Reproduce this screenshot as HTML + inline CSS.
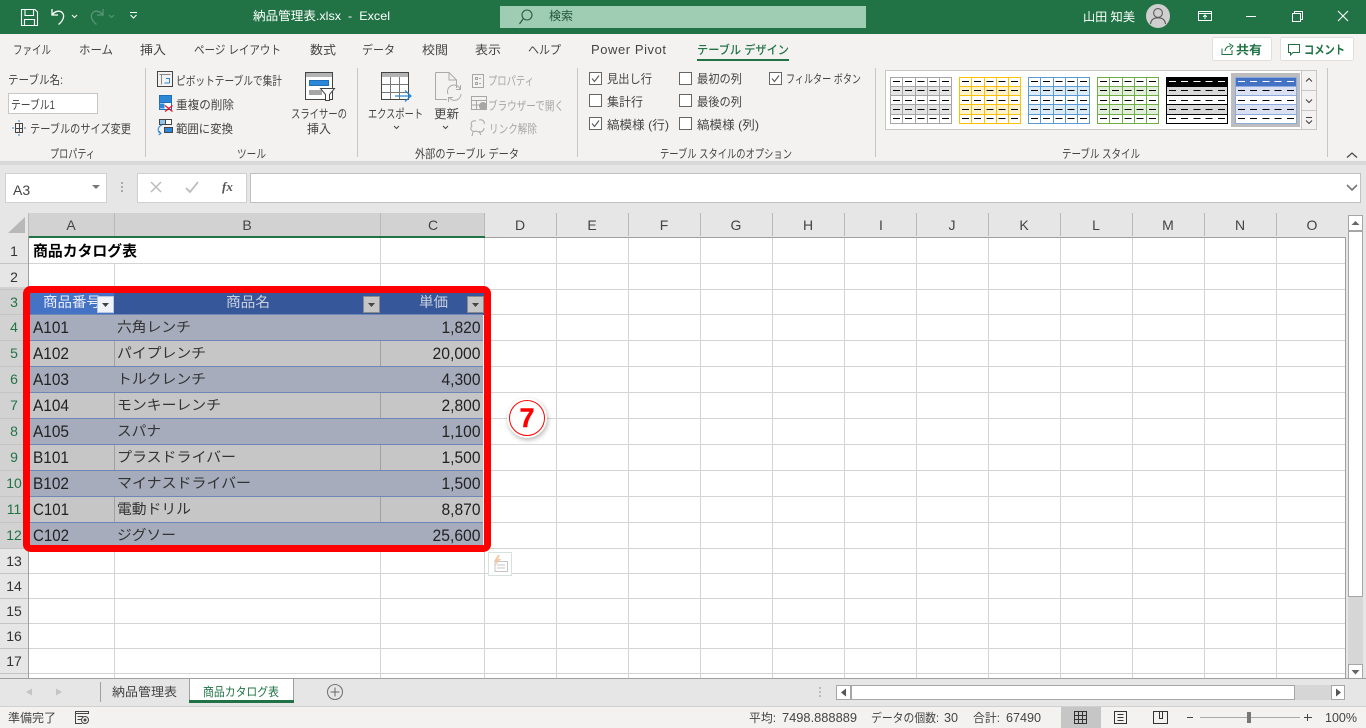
<!DOCTYPE html>
<html lang="ja"><head><meta charset="utf-8"><title>納品管理表.xlsx - Excel</title>
<style>
html,body{margin:0;padding:0;width:1366px;height:728px;overflow:hidden;background:#e6e6e6}
svg{display:block;position:absolute;left:0;top:0}
text{font-family:"Liberation Sans","Noto Sans CJK JP",sans-serif;font-size:12px;fill:#444;white-space:pre}
.w{fill:#fff}.g{fill:#a6a6a6}.c{font-size:14.2px;fill:#333}.d{font-size:16.5px;fill:#222}.h{font-size:14px;fill:#c9d0dc}
.n{font-size:14px;fill:#333;text-anchor:middle}.s{fill:#217346}.l{font-size:14px;fill:#444;text-anchor:middle}
.cr{shape-rendering:crispEdges}
</style></head><body>
<svg width="1366" height="728" viewBox="0 0 1366 728" xmlns="http://www.w3.org/2000/svg">
<defs>
<path id="grid" fill="none" stroke-width="1" d="M.5.5H61.5V46.5H.5ZM.5 9.5H61.5M.5 18.5H61.5M.5 27.5H61.5M.5 37.5H61.5M12.5.5V46.5M25.5.5V46.5M37.5.5V46.5M49.5.5V46.5"/>
<path id="rows" fill="none" stroke-width="1" d="M.5.5H61.5V46.5H.5ZM.5 9.5H61.5M.5 18.5H61.5M.5 27.5H61.5M.5 37.5H61.5"/>
<path id="dash" fill="none" stroke-width="1" stroke-dasharray="7 5.2" d="M3 4.5H61M3 13.5H61M3 23.5H61M3 32.5H61M3 41.5H61"/>
<filter id="soft" x="-40%" y="-40%" width="180%" height="180%"><feGaussianBlur stdDeviation="2.5"/></filter>
</defs>

<!-- backgrounds -->
<g class="cr">
<rect width="1366" height="728" fill="#e6e6e6"/>
<rect width="1366" height="34" fill="#217346"/>
<rect y="34" width="1366" height="127" fill="#f3f2f1"/>
<rect y="161" width="1366" height="4" fill="#d8d8d8"/>
<rect x="500" y="6" width="366" height="22" fill="#9fcdb3"/>
</g>

<!-- title bar -->
<g fill="none" stroke="#fff" stroke-width="1.1">
<path d="M21.5 9.5H35L37.5 12V25.5H21.5ZM25 9.5V15.5H33.5V9.5M24.5 25.5V19.5H34.5V25.5"/>
<path d="M52 9V15H58M52.5 14.5C55 11 60 10 62.5 13C65 16 63 21 58.5 24.5" stroke-width="1.3"/>
<path d="M72 15L74.5 17.5L77 15" stroke-width="1"/>
<g stroke="#5b9476" stroke-width="1.3"><path d="M103 9V15H97M102.5 14.5C100 11 95 10 92.5 13C90 16 92 21 96.5 24.5"/><path d="M109 15L111.5 17.5L114 15" stroke-width="1"/></g>
<path d="M130 12.5H137M130.5 15L133.5 18L136.5 15" stroke-width="1"/>
</g>
<text class="w" x="253" y="20" textLength="137" lengthAdjust="spacingAndGlyphs">納品管理表.xlsx  -  Excel</text>
<circle cx="527" cy="15" r="5" fill="none" stroke="#2b5a41" stroke-width="1.1"/>
<path d="M523 19L519.5 24" stroke="#2b5a41" stroke-width="1.2"/>
<text x="549" y="20" textLength="24" lengthAdjust="spacingAndGlyphs" style="fill:#22553a">検索</text>
<text class="w" x="1083" y="21" textLength="52" lengthAdjust="spacingAndGlyphs">山田 知美</text>
<circle cx="1158" cy="16" r="12" fill="#cfcfcf"/>
<circle cx="1158" cy="13" r="4.4" fill="none" stroke="#5a5a5a" stroke-width="1.1"/>
<path d="M1150.5 24C1151 19.5 1154 17.8 1158 17.8C1162 17.8 1165 19.5 1165.5 24" fill="none" stroke="#5a5a5a" stroke-width="1.1"/>
<g fill="none" stroke="#fff" stroke-width="1" class="cr">
<path d="M1198.5 11.5H1211.5V20.5H1198.5ZM1198.5 13.5H1211.5"/>
<path d="M1205 19V15.5M1203 17L1205 15L1207 17"/>
<path d="M1246 16.5H1256"/>
<path d="M1292.5 13.5H1300.5V21.5H1292.5ZM1294.5 13V11.5H1302.5V19.5H1301"/>
</g>
<path d="M1338 11L1348 21M1348 11L1338 21" stroke="#fff" stroke-width="1.1" fill="none"/>

<!-- ribbon tabs -->
<text x="13" y="54" textLength="38" lengthAdjust="spacingAndGlyphs">ファイル</text>
<text x="79" y="54" textLength="34" lengthAdjust="spacingAndGlyphs">ホーム</text>
<text x="140" y="54" textLength="26" lengthAdjust="spacingAndGlyphs">挿入</text>
<text x="194" y="54" textLength="87" lengthAdjust="spacingAndGlyphs">ページ レイアウト</text>
<text x="310" y="54" textLength="26" lengthAdjust="spacingAndGlyphs">数式</text>
<text x="362" y="54" textLength="33" lengthAdjust="spacingAndGlyphs">データ</text>
<text x="422" y="54" textLength="26" lengthAdjust="spacingAndGlyphs">校閲</text>
<text x="475" y="54" textLength="26" lengthAdjust="spacingAndGlyphs">表示</text>
<text x="528" y="54" textLength="33" lengthAdjust="spacingAndGlyphs">ヘルプ</text>
<text x="591" y="54" textLength="75" lengthAdjust="spacing" style="font-size:13px">Power Pivot</text>
<text x="697" y="54" textLength="92" lengthAdjust="spacingAndGlyphs" style="fill:#217346;font-weight:500">テーブル デザイン</text>
<rect x="697" y="59" width="92" height="2" fill="#217346" class="cr"/>
<g class="cr">
<rect x="1212.5" y="37.5" width="59" height="23" rx="2" fill="#fff" stroke="#e1dfdd"/>
<rect x="1280.5" y="37.5" width="73" height="23" rx="2" fill="#fff" stroke="#e1dfdd"/>
</g>
<path d="M1222 48.5V54.5H1232V50M1225 51C1225.5 47.5 1228 46 1231 46M1229 43.5L1233 46L1230 49.5" fill="none" stroke="#217346"/>
<text x="1236" y="54" textLength="26" lengthAdjust="spacingAndGlyphs" style="fill:#217346;font-weight:700">共有</text>
<path d="M1288.5 44.5H1299.5V52.5H1293L1290.5 55V52.5H1288.5Z" fill="none" stroke="#217346"/>
<text x="1304" y="54" textLength="41" lengthAdjust="spacingAndGlyphs" style="fill:#217346;font-weight:700">コメント</text>

<!-- ribbon separators -->
<path class="cr" d="M145.5 68V157M357.5 68V157M577.5 68V157M875.5 68V157M1327.5 68V157" stroke="#c8c6c4" fill="none"/>

<!-- properties group -->
<text x="8" y="84" textLength="55" lengthAdjust="spacingAndGlyphs">テーブル名:</text>
<rect class="cr" x="8.5" y="93.5" width="89" height="20" fill="#fff" stroke="#c6c6c6"/>
<text x="11" y="109" textLength="44" lengthAdjust="spacingAndGlyphs">テーブル1</text>
<path class="cr" d="M15.5 123.5H22.5V132.5H15.5ZM15.5 128.5H22.5M19.5 123.5V132.5" fill="none" stroke="#444"/>
<path d="M12 128H14M24 128H26M19 120V122M19 134V136" stroke="#2b88d8" fill="none"/>
<text x="30" y="133" textLength="101" lengthAdjust="spacingAndGlyphs">テーブルのサイズ変更</text>
<text x="50" y="158" textLength="45" lengthAdjust="spacingAndGlyphs">プロパティ</text>

<!-- tools group -->
<g class="cr" fill="none">
<rect x="157.5" y="71.5" width="15" height="15" stroke="#444"/>
<path d="M159.5 74.5H170.5M161.5 74.5V84.5" stroke="#888"/>
<path d="M166 78.5H169.5V83M164.5 83H169.5" stroke="#2b88d8"/>
<rect x="159.5" y="95.5" width="12" height="7" fill="#2b88d8" stroke="#1e6fb5"/>
<rect x="159.5" y="102.5" width="12" height="7" fill="#fff" stroke="#1e6fb5"/>
<rect x="159.5" y="103.5" width="5" height="5" fill="#2b88d8"/>
<rect x="159.5" y="119.5" width="6" height="5" fill="#8fc3ea" stroke="#444"/>
<rect x="165.5" y="119.5" width="6" height="5" stroke="#444" fill="#fff"/>
<rect x="164.5" y="127.5" width="8" height="5" fill="#2b88d8" stroke="#444"/>
</g>
<path d="M165 105.5L172.5 111.5M172.5 105.5L165 111.5" stroke="#e81123" stroke-width="1.2" fill="none"/>
<path d="M162 125C157 127 157 132 161 133.5M159 131L161 133.5L158.5 135" stroke="#2b88d8" fill="none"/>
<text x="176" y="85" textLength="106" lengthAdjust="spacingAndGlyphs">ピボットテーブルで集計</text>
<text x="176" y="109" textLength="58" lengthAdjust="spacingAndGlyphs">重複の削除</text>
<text x="176" y="133" textLength="57" lengthAdjust="spacingAndGlyphs">範囲に変換</text>
<text x="237" y="158" textLength="29" lengthAdjust="spacingAndGlyphs">ツール</text>
<g class="cr">
<rect x="305.5" y="72.5" width="27" height="27" fill="#fff" stroke="#444"/>
<rect x="306" y="73" width="26" height="4" fill="#b3b3b3"/>
<rect x="309.5" y="80.5" width="19" height="5" fill="#2b88d8" stroke="#1e6fb5"/>
<rect x="309" y="90" width="13" height="5" fill="#a6a6a6"/>
</g>
<path d="M320.5 88.5H334.5L329.5 94.5V100.5H325.5V94.5Z" fill="#fff" stroke="#444"/>
<text x="291" y="118" textLength="56" lengthAdjust="spacingAndGlyphs">スライサーの</text>
<text x="307" y="133" textLength="24" lengthAdjust="spacingAndGlyphs">挿入</text>

<!-- external data -->
<g class="cr" fill="none">
<rect x="381.5" y="72.5" width="27" height="27" fill="#fff" stroke="#444"/>
<rect x="382" y="73" width="26" height="4" fill="#b3b3b3"/>
<path d="M382 84.5H408M382 92.5H408M390.5 77V99M399.5 77V99" stroke="#777"/>
</g>
<path d="M395 96H410M405 90.5L411 96L405 101.5" fill="none" stroke="#2b88d8" stroke-width="1.2"/>
<text x="368" y="118" textLength="55" lengthAdjust="spacingAndGlyphs">エクスポート</text>
<path d="M394 126L396.5 128.5L399 126" fill="none" stroke="#444"/>
<path d="M435.5 72.5H449L456.5 80V88M449 72.5V80H456.5M435.5 72.5V99.5H447" fill="none" stroke="#aaa"/>
<path d="M448 94A6.5 6.5 0 0 1 460 89M461 94A6.5 6.5 0 0 1 449.5 98M460.5 85V89.5H456M448.5 102V97.5H453" fill="none" stroke="#aaa"/>
<text x="434" y="118" textLength="25" lengthAdjust="spacingAndGlyphs">更新</text>
<path d="M443 126L445.5 128.5L448 126" fill="none" stroke="#444"/>
<g fill="none" stroke="#a6a6a6" class="cr">
<path d="M472.5 74.5H483.5V87.5H472.5ZM475.5 77.5H477.5V79.5H475.5ZM475.5 82.5H477.5V84.5H475.5ZM479 78.5H481M479 83.5H481"/>
<path d="M471.5 96.5H486.5V109.5H471.5ZM471.5 100.5H486.5M476.5 100.5V109.5M471.5 105H480"/>
</g>
<circle cx="483" cy="106" r="4" fill="#a6a6a6"/>
<path d="M476 121C472 120 470 123 472 126C469 128 472 133 476 131C479 133 484 132 484 128M479 120C483 119 485 122 484 124M473 132L472 136M479 131L481 135" fill="none" stroke="#a6a6a6"/>
<text class="g" x="488" y="85" textLength="46" lengthAdjust="spacingAndGlyphs">プロパティ</text>
<text class="g" x="488" y="110" textLength="76" lengthAdjust="spacingAndGlyphs">ブラウザーで開く</text>
<text class="g" x="489" y="133" textLength="48" lengthAdjust="spacingAndGlyphs">リンク解除</text>
<text x="415" y="158" textLength="104" lengthAdjust="spacingAndGlyphs">外部のテーブル データ</text>

<!-- style options -->
<g class="cr" fill="#fff" stroke="#666">
<rect x="589.5" y="72.5" width="12" height="12"/>
<rect x="589.5" y="94.5" width="12" height="12"/>
<rect x="589.5" y="117.5" width="12" height="12"/>
<rect x="679.5" y="72.5" width="12" height="12"/>
<rect x="679.5" y="94.5" width="12" height="12"/>
<rect x="679.5" y="117.5" width="12" height="12"/>
<rect x="769.5" y="72.5" width="12" height="12"/>
</g>
<path d="M592 78.5L594.5 81.5L599 75.5M592 123.5L594.5 126.5L599 120.5M772 78.5L774.5 81.5L779 75.5" fill="none" stroke="#555" stroke-width="1.1"/>
<text x="607" y="83" textLength="45" lengthAdjust="spacingAndGlyphs">見出し行</text>
<text x="607" y="106" textLength="36" lengthAdjust="spacingAndGlyphs">集計行</text>
<text x="607" y="129" textLength="62" lengthAdjust="spacingAndGlyphs">縞模様 (行)</text>
<text x="697" y="83" textLength="45" lengthAdjust="spacingAndGlyphs">最初の列</text>
<text x="697" y="106" textLength="45" lengthAdjust="spacingAndGlyphs">最後の列</text>
<text x="697" y="129" textLength="62" lengthAdjust="spacingAndGlyphs">縞模様 (列)</text>
<text x="786" y="83" textLength="75" lengthAdjust="spacingAndGlyphs">フィルター ボタン</text>
<text x="660" y="158" textLength="132" lengthAdjust="spacingAndGlyphs">テーブル スタイルのオプション</text>

<!-- gallery -->
<g class="cr">
<rect x="885.5" y="70.5" width="431" height="59" fill="#fff" stroke="#c6c6c6"/>
<rect x="1231" y="73" width="69" height="54" fill="#bdbdbd"/>
<g transform="translate(890,77)"><rect y="9" width="61" height="9" fill="#e4e4e4"/><rect y="27" width="61" height="10" fill="#e4e4e4"/><use href="#grid" stroke="#a5a5a5"/><use href="#dash" stroke="#000"/></g>
<g transform="translate(959,77)"><rect y="9" width="61" height="9" fill="#fff2cc"/><rect y="27" width="61" height="10" fill="#fff2cc"/><use href="#grid" stroke="#ffc000"/><use href="#dash" stroke="#000"/></g>
<g transform="translate(1028,77)"><rect y="9" width="61" height="9" fill="#ddebf7"/><rect y="27" width="61" height="10" fill="#ddebf7"/><use href="#grid" stroke="#5b9bd5"/><use href="#dash" stroke="#000"/></g>
<g transform="translate(1097,77)"><rect y="9" width="61" height="9" fill="#e2efda"/><rect y="27" width="61" height="10" fill="#e2efda"/><use href="#grid" stroke="#70ad47"/><use href="#dash" stroke="#000"/></g>
<g transform="translate(1166,77)"><rect width="61" height="47" fill="#fff"/><rect width="61" height="9" fill="#000"/><rect y="9" width="61" height="9" fill="#d9d9d9"/><rect y="27" width="61" height="10" fill="#d9d9d9"/><use href="#rows" stroke="#000"/><path d="M3 4.5H61" stroke="#fff" stroke-dasharray="7 5.2" fill="none"/><path d="M3 13.5H61M3 23.5H61M3 32.5H61M3 41.5H61" stroke="#000" stroke-dasharray="7 5.2" fill="none"/></g>
<g transform="translate(1235,77)"><rect width="61" height="47" fill="#fff"/><rect width="61" height="9" fill="#4472c4"/><rect y="9" width="61" height="9" fill="#d9e1f2"/><rect y="27" width="61" height="10" fill="#d9e1f2"/><use href="#rows" stroke="#8ea9db"/><path d="M3 4.5H61" stroke="#fff" stroke-dasharray="7 5.2" fill="none"/><path d="M3 13.5H61M3 23.5H61M3 32.5H61M3 41.5H61" stroke="#000" stroke-dasharray="7 5.2" fill="none"/></g>
<rect x="1301.5" y="70.5" width="15" height="20" fill="#f3f2f1" stroke="#c6c6c6"/>
<rect x="1301.5" y="90.5" width="15" height="20" fill="#f3f2f1" stroke="#c6c6c6"/>
<rect x="1301.5" y="110.5" width="15" height="19" fill="#f3f2f1" stroke="#c6c6c6"/>
</g>
<path d="M1306 81.5L1309 78.5L1312 81.5M1306 99.5L1309 102.5L1312 99.5M1306 117.5H1312M1306 120.5L1309 123.5L1312 120.5" fill="none" stroke="#444" stroke-width="1.1"/>
<text x="1062" y="158" textLength="78" lengthAdjust="spacingAndGlyphs">テーブル スタイル</text>
<path d="M1347 157.5L1352 153L1357 157.5" fill="none" stroke="#444" stroke-width="1.2"/>

<!-- formula bar -->
<g class="cr">
<rect x="5.5" y="173.5" width="101" height="29" fill="#fff" stroke="#d0d0d0"/>
<rect x="137.5" y="173.5" width="109" height="29" fill="#fff" stroke="#d0d0d0"/>
<rect x="250.5" y="173.5" width="1110" height="29" fill="#fff" stroke="#c0c0c0"/>
</g>
<text x="13" y="195" style="font-size:14px">A3</text>
<path d="M92 185H100L96 189Z" fill="#777"/>
<path class="cr" d="M121 182h2v2h-2zM121 186h2v2h-2zM121 190h2v2h-2z" fill="#aaa"/>
<path d="M151 182L161 192M161 182L151 192" stroke="#bbb" stroke-width="1.5" fill="none"/>
<path d="M186 188L190 192L198 182" stroke="#bbb" stroke-width="1.8" fill="none"/>
<text x="222" y="191" style="font-family:'Liberation Serif',serif;font-style:italic;font-weight:700;font-size:13px;fill:#555">fx</text>
<path d="M1347 185L1352 190L1357 185" fill="none" stroke="#777" stroke-width="1.6"/>

<!-- sheet -->
<g class="cr">
<rect x="29" y="238" width="1316" height="440" fill="#fff"/>
<rect x="29" y="213" width="456" height="23" fill="#d2d2d2"/>
<rect x="0" y="287" width="28" height="261" fill="#d2d2d2"/>
<path d="M8 233H25V217Z" fill="#b8b8b8" shape-rendering="auto"/>
<path fill="none" stroke="#d4d4d4" d="M29 263.5H1345M29 289.5H1345M29 314.5H1345M29 340.5H1345M29 366.5H1345M29 392.5H1345M29 418.5H1345M29 444.5H1345M29 470.5H1345M29 496.5H1345M29 522.5H1345M29 548.5H1345M29 573.5H1345M29 598.5H1345M29 623.5H1345M29 648.5H1345M29 673.5H1345"/>
<path fill="none" stroke="#d4d4d4" d="M114.5 263V678M380.5 238V678M484.5 238V678M556.5 238V678M628.5 238V678M700.5 238V678M772.5 238V678M844.5 238V678M916.5 238V678M988.5 238V678M1060.5 238V678M1132.5 238V678M1204.5 238V678M1276.5 238V678"/>
<path fill="none" stroke="#b9b9b9" d="M28.5 213V236M114.5 213V236M380.5 213V236M484.5 213V236M556.5 213V236M628.5 213V236M700.5 213V236M772.5 213V236M844.5 213V236M916.5 213V236M988.5 213V236M1060.5 213V236M1132.5 213V236M1204.5 213V236M1276.5 213V236"/>
<path fill="none" stroke="#c4c4c4" d="M0 263.5H28M0 289.5H28M0 314.5H28M0 340.5H28M0 366.5H28M0 392.5H28M0 418.5H28M0 444.5H28M0 470.5H28M0 496.5H28M0 522.5H28M0 548.5H28M0 573.5H28M0 598.5H28M0 623.5H28M0 648.5H28M0 673.5H28"/>
<path fill="none" stroke="#9f9f9f" d="M28.5 236V678M485 237.5H1345.5V678M29 678.5H1345.5"/>
<rect x="29" y="236" width="456" height="2" fill="#217346"/>

<!-- table -->
<rect x="30" y="293" width="454" height="22" fill="#36589a"/>
<rect x="30" y="293" width="84" height="22" fill="#4472c4"/>
<rect x="30" y="315" width="453" height="26" fill="#a6acbb"/>
<rect x="30" y="341" width="453" height="26" fill="#c6c6c6"/>
<rect x="30" y="367" width="453" height="26" fill="#a6acbb"/>
<rect x="30" y="393" width="453" height="26" fill="#c6c6c6"/>
<rect x="30" y="419" width="453" height="26" fill="#a6acbb"/>
<rect x="30" y="445" width="453" height="26" fill="#c6c6c6"/>
<rect x="30" y="471" width="453" height="26" fill="#a6acbb"/>
<rect x="30" y="497" width="453" height="26" fill="#c6c6c6"/>
<rect x="30" y="523" width="453" height="23" fill="#a6acbb"/>
<rect x="483" y="315" width="1" height="231" fill="#fff"/>
<path fill="none" stroke="#a0a0a0" d="M114.5 341V366M380.5 341V366M114.5 393V418M380.5 393V418M114.5 445V470M380.5 445V470M114.5 497V522M380.5 497V522"/>
<path fill="none" stroke="#6f87b5" d="M30 314.5H483M30 340.5H483M30 366.5H483M30 392.5H483M30 418.5H483M30 444.5H483M30 470.5H483M30 496.5H483M30 522.5H483"/>
</g>

<!-- column letters -->
<text class="l s" x="71" y="230">A</text>
<text class="l s" x="247" y="230">B</text>
<text class="l s" x="433" y="230">C</text>
<text class="l" x="520" y="230">D</text>
<text class="l" x="592" y="230">E</text>
<text class="l" x="664" y="230">F</text>
<text class="l" x="736" y="230">G</text>
<text class="l" x="808" y="230">H</text>
<text class="l" x="881" y="230">I</text>
<text class="l" x="952" y="230">J</text>
<text class="l" x="1024" y="230">K</text>
<text class="l" x="1096" y="230">L</text>
<text class="l" x="1168" y="230">M</text>
<text class="l" x="1240" y="230">N</text>
<text class="l" x="1312" y="230">O</text>

<!-- row numbers -->
<text class="n" x="14" y="256">1</text>
<text class="n" x="14" y="282">2</text>
<text class="n s" x="14" y="307">3</text>
<text class="n s" x="14" y="332">4</text>
<text class="n s" x="14" y="358">5</text>
<text class="n s" x="14" y="384">6</text>
<text class="n s" x="14" y="410">7</text>
<text class="n s" x="14" y="436">8</text>
<text class="n s" x="14" y="462">9</text>
<text class="n s" x="14" y="488">10</text>
<text class="n s" x="14" y="514">11</text>
<text class="n s" x="14" y="540">12</text>
<text class="n" x="14" y="566">13</text>
<text class="n" x="14" y="591">14</text>
<text class="n" x="14" y="616">15</text>
<text class="n" x="14" y="641">16</text>
<text class="n" x="14" y="666">17</text>

<!-- cell text -->
<text x="33" y="256" textLength="104" lengthAdjust="spacingAndGlyphs" style="font-size:14.67px;font-weight:700;fill:#000">商品カタログ表</text>
<text class="h" x="43" y="307" textLength="58" lengthAdjust="spacingAndGlyphs" style="fill:#e8ecf5">商品番号</text>
<text class="h" x="226" y="307" textLength="44" lengthAdjust="spacingAndGlyphs">商品名</text>
<text class="h" x="419" y="307" textLength="29" lengthAdjust="spacingAndGlyphs">単価</text>

<text class="d" x="33" y="333" textLength="36" lengthAdjust="spacingAndGlyphs">A101</text>
<text class="d" x="33" y="359" textLength="36" lengthAdjust="spacingAndGlyphs">A102</text>
<text class="d" x="33" y="385" textLength="36" lengthAdjust="spacingAndGlyphs">A103</text>
<text class="d" x="33" y="411" textLength="36" lengthAdjust="spacingAndGlyphs">A104</text>
<text class="d" x="33" y="437" textLength="36" lengthAdjust="spacingAndGlyphs">A105</text>
<text class="d" x="33" y="463" textLength="36" lengthAdjust="spacingAndGlyphs">B101</text>
<text class="d" x="33" y="489" textLength="36" lengthAdjust="spacingAndGlyphs">B102</text>
<text class="d" x="33" y="515" textLength="36" lengthAdjust="spacingAndGlyphs">C101</text>
<text class="d" x="33" y="541" textLength="36" lengthAdjust="spacingAndGlyphs">C102</text>

<text class="c" x="117" y="332" textLength="74" lengthAdjust="spacingAndGlyphs">六角レンチ</text>
<text class="c" x="117" y="358" textLength="89" lengthAdjust="spacingAndGlyphs">パイプレンチ</text>
<text class="c" x="117" y="384" textLength="89" lengthAdjust="spacingAndGlyphs">トルクレンチ</text>
<text class="c" x="117" y="410" textLength="104" lengthAdjust="spacingAndGlyphs">モンキーレンチ</text>
<text class="c" x="117" y="436" textLength="44" lengthAdjust="spacingAndGlyphs">スパナ</text>
<text class="c" x="117" y="462" textLength="119" lengthAdjust="spacingAndGlyphs">プラスドライバー</text>
<text class="c" x="117" y="488" textLength="134" lengthAdjust="spacingAndGlyphs">マイナスドライバー</text>
<text class="c" x="117" y="514" textLength="74" lengthAdjust="spacingAndGlyphs">電動ドリル</text>
<text class="c" x="117" y="540" textLength="59" lengthAdjust="spacingAndGlyphs">ジグソー</text>

<text class="d" x="441.5" y="333" textLength="39" lengthAdjust="spacingAndGlyphs">1,820</text>
<text class="d" x="432.5" y="359" textLength="48" lengthAdjust="spacingAndGlyphs">20,000</text>
<text class="d" x="441.5" y="385" textLength="39" lengthAdjust="spacingAndGlyphs">4,300</text>
<text class="d" x="441.5" y="411" textLength="39" lengthAdjust="spacingAndGlyphs">2,800</text>
<text class="d" x="441.5" y="437" textLength="39" lengthAdjust="spacingAndGlyphs">1,100</text>
<text class="d" x="441.5" y="463" textLength="39" lengthAdjust="spacingAndGlyphs">1,500</text>
<text class="d" x="441.5" y="489" textLength="39" lengthAdjust="spacingAndGlyphs">1,500</text>
<text class="d" x="441.5" y="515" textLength="39" lengthAdjust="spacingAndGlyphs">8,870</text>
<text class="d" x="432.5" y="541" textLength="48" lengthAdjust="spacingAndGlyphs">25,600</text>

<!-- filter buttons -->
<g class="cr">
<rect x="97.5" y="296.5" width="16" height="16" fill="#f0f3f9" stroke="#b8c6e0"/>
<rect x="363.5" y="296.5" width="16" height="16" fill="#c6c6c6" stroke="#8a8a8a"/>
<rect x="467.5" y="296.5" width="16" height="16" fill="#c6c6c6" stroke="#8a8a8a"/>
</g>
<path d="M102 303H109L105.5 307Z M368 303H375L371.5 307Z M472 303H479L475.5 307Z" fill="#444"/>

<!-- red highlight -->
<rect x="26.5" y="289.5" width="461" height="259" rx="4" fill="none" stroke="#f00" stroke-width="7"/>

<!-- quick analysis -->
<rect class="cr" x="488.5" y="552.5" width="23" height="23" fill="#fff" stroke="#d5e3dc"/>
<path class="cr" d="M495 561.5H507.5V571.5H495ZM497 565H505M497 568H505" fill="none" stroke="#c4c4c4"/>
<path d="M498 555L494 561H497L495 566L501 559H498L500 555Z" fill="#f5c9a4"/>

<!-- number badge -->
<circle cx="528" cy="420" r="20" fill="#000" opacity=".28" filter="url(#soft)"/>
<circle cx="527" cy="418" r="20" fill="#fff"/>
<circle cx="527" cy="418" r="17.5" fill="#fff" stroke="#f00" stroke-width="1"/>
<text x="527" y="427" text-anchor="middle" style="font-size:27px;font-weight:700;fill:#f00;stroke:#f00;stroke-width:.4">7</text>

<!-- vertical scrollbar -->
<g class="cr">
<rect x="1348" y="215" width="15" height="464" fill="#d6d6d6"/>
<rect x="1348.5" y="215.5" width="14" height="15" fill="#fff" stroke="#a6a6a6"/>
<rect x="1348.5" y="231.5" width="14" height="365" fill="#fff" stroke="#a6a6a6"/>
<rect x="1348.5" y="664.5" width="14" height="14" fill="#fff" stroke="#a6a6a6"/>
</g>
<path d="M1351.5 225H1359.5L1355.5 221Z M1351.5 670H1359.5L1355.5 674.5Z" fill="#666"/>

<!-- sheet tabs -->
<rect class="cr" y="678" width="1366" height="1" fill="#9f9f9f"/>
<rect class="cr" x="1345" y="679" width="21" height="27" fill="#e6e6e6"/>
<path d="M32 688.5L26 692L32 695.5ZM56 688.5L62 692L56 695.5Z" fill="#c4c4c4"/>
<rect class="cr" x="100" y="682" width="1" height="20" fill="#9f9f9f"/>
<text x="112" y="696" textLength="65" lengthAdjust="spacingAndGlyphs" style="fill:#444">納品管理表</text>
<path class="cr" d="M189.5 702V678.5H293.5V702" fill="#fff" stroke="#9f9f9f"/>
<rect class="cr" x="189" y="700" width="105" height="3" fill="#217346"/>
<text x="203" y="696" textLength="76" lengthAdjust="spacingAndGlyphs" style="fill:#217346">商品カタログ表</text>
<circle cx="335" cy="692" r="7.5" fill="none" stroke="#777" stroke-width="1.1"/>
<path class="cr" d="M330.5 692H339.5M335 687.5V696.5" stroke="#666" stroke-width="1.4" fill="none"/>
<path class="cr" d="M819 687h2v2h-2zM819 691h2v2h-2zM819 695h2v2h-2z" fill="#bbb"/>

<!-- horizontal scrollbar -->
<g class="cr">
<rect x="836" y="685" width="509" height="15" fill="#d6d6d6"/>
<rect x="836.5" y="685.5" width="14" height="14" fill="#fff" stroke="#a6a6a6"/>
<rect x="851.5" y="685.5" width="443" height="14" fill="#fff" stroke="#a6a6a6"/>
<rect x="1331.5" y="685.5" width="13" height="14" fill="#fff" stroke="#a6a6a6"/>
</g>
<path d="M846 688.5L841 692.5L846 696.5ZM1336 688.5L1341 692.5L1336 696.5Z" fill="#555"/>

<!-- status bar -->
<rect class="cr" y="706" width="1366" height="22" fill="#f3f2f1"/>
<rect class="cr" y="706" width="1366" height="1" fill="#d0d0d0"/>
<text x="8" y="722" textLength="48" lengthAdjust="spacingAndGlyphs">準備完了</text>
<g fill="none" stroke="#444" class="cr"><path d="M75.5 711.5H88.5V713.5H75.5ZM75.5 713.5V723.5H82M77.5 716.5H83M77.5 719.5H81"/></g>
<circle cx="85" cy="720" r="3.5" fill="none" stroke="#444"/><circle cx="85" cy="720" r="1.5" fill="#444"/>
<text x="749" y="722" textLength="27" lengthAdjust="spacingAndGlyphs">平均:</text>
<text x="782" y="722" textLength="75" lengthAdjust="spacingAndGlyphs" style="font-size:13px">7498.888889</text>
<text x="871" y="722" textLength="68" lengthAdjust="spacingAndGlyphs">データの個数:</text>
<text x="944" y="722" textLength="14" lengthAdjust="spacingAndGlyphs" style="font-size:13px">30</text>
<text x="973" y="722" textLength="27" lengthAdjust="spacingAndGlyphs">合計:</text>
<text x="1006" y="722" textLength="35" lengthAdjust="spacingAndGlyphs" style="font-size:13px">67490</text>
<rect class="cr" x="1061" y="707" width="40" height="21" fill="#c6c6c6"/>
<g class="cr" fill="none" stroke="#333">
<path d="M1074.5 711.5H1086.5V723.5H1074.5ZM1074.5 715.5H1086.5M1074.5 719.5H1086.5M1078.5 711.5V723.5M1082.5 711.5V723.5"/>
<path d="M1114.5 711.5H1126.5V723.5H1114.5ZM1117.5 714.5H1123.5M1117.5 717.5H1123.5M1117.5 720.5H1123.5"/>
<path d="M1153.5 711.5H1167.5V723.5H1153.5ZM1159.5 711.5V718.5H1162.5V711.5"/>
<path d="M1187 717.5H1193" stroke="#444"/>
<path d="M1304 717.5H1312M1307.5 714V721" stroke="#444"/>
<path d="M1200 717.5H1300" stroke="#aaa"/>
</g>
<rect class="cr" x="1247" y="712" width="4" height="11" fill="#777"/>
<text x="1325" y="722" textLength="32" lengthAdjust="spacingAndGlyphs" style="font-size:13px">100%</text>
</svg>
</body></html>
